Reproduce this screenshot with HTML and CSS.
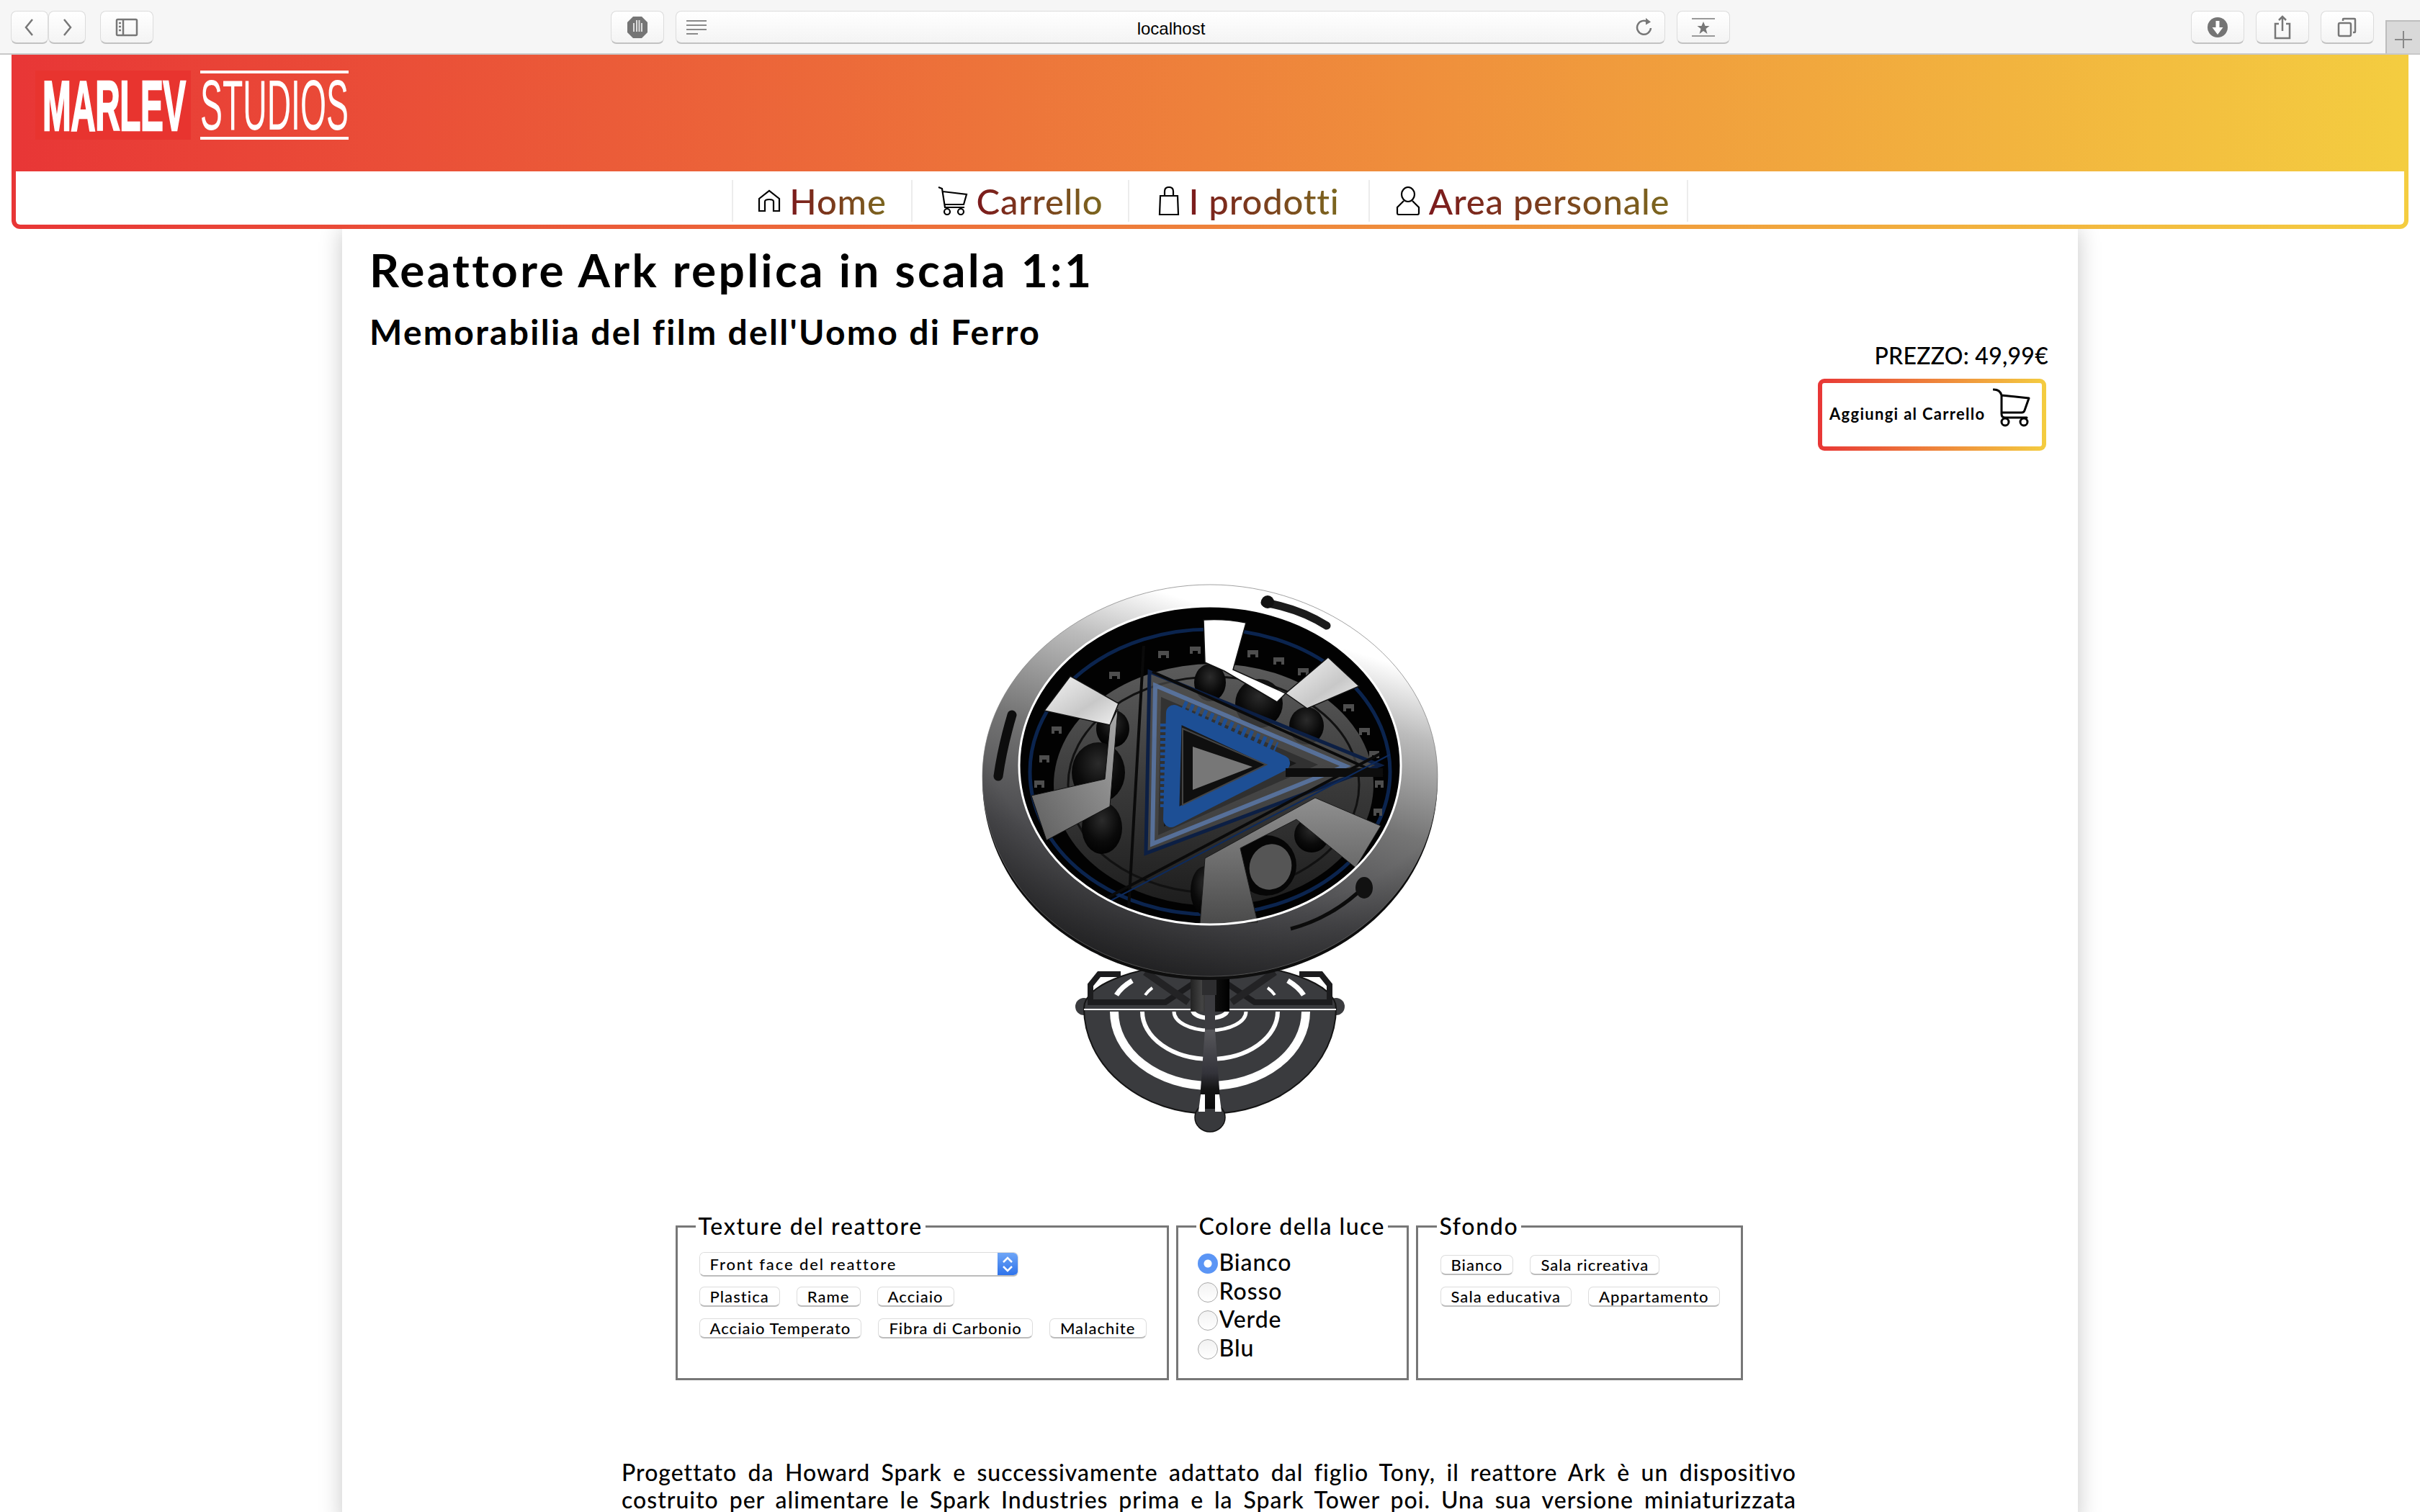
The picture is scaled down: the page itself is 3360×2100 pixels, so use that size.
FILE: index.html
```html
<!DOCTYPE html>
<html lang="it">
<head>
<meta charset="utf-8">
<title>Reattore Ark</title>
<link rel="stylesheet" href="styles.css">
</head>
<body>
<div class="toolbar">
  <div class="tb-group">
    <div class="tb-pair">
      <span class="tb-btn tb-nav"><svg width="16" height="28" viewBox="0 0 16 28"><path d="M12 3 3 14l9 11" class="ico"/></svg></span>
      <span class="tb-btn tb-nav"><svg width="16" height="28" viewBox="0 0 16 28"><path d="M4 3l9 11-9 11" class="ico"/></svg></span>
    </div>
    <span class="tb-btn tb-wide"><svg width="32" height="26" viewBox="0 0 32 26"><rect x="2" y="2" width="28" height="22" rx="1.5" class="ico"/><path d="M11 2v22" class="ico"/><path d="M5 7h3M5 12h3M5 17h3" class="ico"/></svg></span>
  </div>
  <div class="tb-center">
    <span class="tb-btn tb-wide"><svg width="30" height="32" viewBox="0 0 30 32"><path d="M9 1h12l8 8v14l-8 8H9l-8-8V9z" fill="#757575"/><path d="M10 22V10M14 22V6M17.500 22V6M21 22V10" stroke="#fff" stroke-width="2" opacity=".75"/></svg></span>
    <div class="url">
      <svg class="url-lines" width="28" height="22" viewBox="0 0 28 22"><path d="M0 2h28M0 8h28M0 14h28M0 20h16" stroke="#8a8a8a" stroke-width="2"/></svg>
      <span class="url-text">localhost</span>
      <svg class="url-reload" width="24" height="28" viewBox="0 0 24 28"><path d="M17 6.500A9.500 9.500 0 1 0 21 15" class="ico"/><path d="M14 1l7 5.500-7 4z" fill="#777"/></svg>
    </div>
    <span class="tb-btn tb-wide"><svg width="36" height="28" viewBox="0 0 36 28"><path d="M2 2h32M2 26h32" stroke="#999" stroke-width="2"/><path d="M18 6l2.500 6h6l-5 4 2 7-5.500-4-5.500 4 2-7-5-4h6z" fill="#777"/></svg></span>
  </div>
  <div class="tb-right">
    <span class="tb-btn tb-wide"><svg width="30" height="30" viewBox="0 0 30 30"><circle cx="15" cy="15" r="14" fill="#757575"/><path d="M12.500 6h5v9h5L15 25 7.500 15h5z" fill="#fff"/></svg></span>
    <span class="tb-btn tb-wide"><svg width="26" height="34" viewBox="0 0 26 34"><path d="M8 12H3v20h20V12h-5M13 22V2M8 7l5-5 5 5" class="ico"/></svg></span>
    <span class="tb-btn tb-wide"><svg width="28" height="28" viewBox="0 0 28 28"><rect x="2" y="8" width="17" height="18" rx="2" class="ico"/><path d="M8 5V3q0-1 1-1h15q1 0 1 1v17q0 1-1 1h-2" class="ico"/></svg></span>
    <span class="tb-plus"><svg width="24" height="24" viewBox="0 0 24 24"><path d="M12 0v24M0 12h24" stroke="#888" stroke-width="2"/></svg></span>
  </div>
</div>

<header class="site-header">
  <div class="brand">
    <div class="logo">
      <div class="logo-box"><span class="logo-marlev">MARLEV</span></div>
      <div class="logo-studios"><span class="logo-studios-text">STUDIOS</span></div>
    </div>
  </div>
  <nav class="site-nav">
    <ul class="nav-list">
      <li class="nav-item"><svg class="nav-ico" width="32" height="32" viewBox="0 0 32 32"><path d="M2 30V13L16 2l14 11v17h-8V17q0-3-6-3t-6 3v13z" class="ico-k"/></svg><a class="nav-link">Home</a></li>
      <li class="nav-item"><svg class="nav-ico" width="42" height="40" viewBox="0 0 42 40"><path d="M1 1l5 2 4 26h27M7 7l33 4-4 14H10" class="ico-k"/><circle cx="13" cy="35" r="4" class="ico-k"/><circle cx="32" cy="35" r="4" class="ico-k"/></svg><a class="nav-link">Carrello</a></li>
      <li class="nav-item"><svg class="nav-ico" width="30" height="40" viewBox="0 0 30 40"><path d="M3 13h24l1 26H2zM9 13V7q0-6 6-6t6 6v6" class="ico-k"/></svg><a class="nav-link">I prodotti</a></li>
      <li class="nav-item nav-item-last"><svg class="nav-ico" width="34" height="40" viewBox="0 0 34 40"><ellipse cx="17" cy="11" rx="9" ry="10" class="ico-k"/><path d="M11 20 2 29v8q0 2 2 2h26q2 0 2-2v-8l-9-9" class="ico-k"/></svg><a class="nav-link">Area personale</a></li>
    </ul>
  </nav>
</header>

<main class="card">
  <div class="product-head">
    <div class="titles">
      <h1 class="title">Reattore Ark replica in scala 1:1</h1>
      <h2 class="subtitle">Memorabilia del film dell'Uomo di Ferro</h2>
    </div>
    <div class="purchase">
      <div class="price">PREZZO: 49,99€</div>
      <button class="add-cart" type="button">
        <span class="add-cart-text">Aggiungi al Carrello</span>
        <svg class="add-cart-ico" width="52" height="54" viewBox="0 0 52 54"><path d="M1 2q9 0 11 8v26q0 5 5 5h30M12 10l38 4-6 17q-1 3-4 3H12" class="ico-cart"/><circle cx="17" cy="47" r="5" class="ico-cart"/><circle cx="43" cy="47" r="5" class="ico-cart"/></svg>
      </button>
    </div>
  </div>

  <svg class="reactor" width="700" height="800" viewBox="1330 790 700 800" role="img" aria-label="Modello 3D del reattore Ark">
    <defs>
      <linearGradient id="ringG" x1=".72" y1="0" x2=".36" y2="1">
        <stop offset="0" stop-color="#fff"/><stop offset=".12" stop-color="#fff"/><stop offset=".27" stop-color="#bcbcbc"/>
        <stop offset=".5" stop-color="#757575"/><stop offset=".75" stop-color="#4a4a4d"/><stop offset="1" stop-color="#2e2e30"/>
      </linearGradient>
      <radialGradient id="edgeG" cx=".55" cy=".28" r=".78">
        <stop offset="0" stop-color="#000" stop-opacity="0"/><stop offset=".72" stop-color="#000" stop-opacity="0"/><stop offset="1" stop-color="#000" stop-opacity=".4"/>
      </radialGradient>
      <linearGradient id="discG" x1="0" y1="0" x2="0" y2="1">
        <stop offset="0" stop-color="#5c5c5c"/><stop offset=".5" stop-color="#3a3a3a"/><stop offset="1" stop-color="#1d1d1d"/>
      </linearGradient>
      <linearGradient id="finW" x1="0" y1="0" x2="1" y2="1">
        <stop offset="0" stop-color="#f4f4f4"/><stop offset=".6" stop-color="#c8c8c8"/><stop offset="1" stop-color="#f0f0f0"/>
      </linearGradient>
      <linearGradient id="finL" x1="1" y1="0" x2="0" y2="1">
        <stop offset="0" stop-color="#a8a8a8"/><stop offset="1" stop-color="#5e5e5e"/>
      </linearGradient>
      <linearGradient id="finB" x1="0" y1="0" x2="0" y2="1">
        <stop offset="0" stop-color="#909090"/><stop offset="1" stop-color="#4a4a4a"/>
      </linearGradient>
      <linearGradient id="spineG" x1="0" y1="0" x2="0" y2="1">
        <stop offset="0" stop-color="#58585c"/><stop offset=".55" stop-color="#33333a"/><stop offset=".75" stop-color="#141414"/><stop offset="1" stop-color="#0a0a0a"/>
      </linearGradient>
      <linearGradient id="postG" x1="0" y1="0" x2="1" y2="0">
        <stop offset="0" stop-color="#222"/><stop offset=".3" stop-color="#444"/><stop offset=".55" stop-color="#111"/><stop offset="1" stop-color="#000"/>
      </linearGradient>
      <radialGradient id="holeG" cx=".5" cy=".35" r=".7">
        <stop offset="0" stop-color="#2b2b2b"/><stop offset=".6" stop-color="#0a0a0a"/><stop offset="1" stop-color="#000"/>
      </radialGradient>
    </defs>

    <!-- base -->
    <circle cx="1505" cy="1398" r="12" fill="#3a3b3e"/>
    <circle cx="1855" cy="1398" r="12" fill="#3a3b3e"/>
    <path d="M1505 1400A175 62 0 0 1 1855 1400A175 147 0 0 1 1505 1400Z" fill="#3a3b3e" stroke="#141414" stroke-width="2"/>
    <ellipse cx="1680" cy="1552" rx="21" ry="20" fill="#38393c" stroke="#111" stroke-width="1.500"/>
    <g fill="none" stroke="#fff">
      <path d="M1547 1405A133 103 0 0 0 1813 1405" stroke-width="12"/>
      <path d="M1586 1405A94 66 0 0 0 1774 1405" stroke-width="6"/>
      <path d="M1630 1405A50 26 0 0 0 1730 1405" stroke-width="5"/>
      <path d="M1656 1403A24 11 0 0 0 1704 1403" stroke-width="6"/>
      <path d="M1550 1382A130 60 0 0 1 1572 1362" stroke-width="7"/>
      <path d="M1810 1382A130 60 0 0 0 1788 1362" stroke-width="7"/>
      <path d="M1590 1382A90 40 0 0 1 1600 1372" stroke-width="4"/>
      <path d="M1770 1382A90 40 0 0 0 1760 1372" stroke-width="4"/>
    </g>
    <path d="M1505 1402H1855" stroke="#fff" stroke-width="2"/>
    <path d="M1673 1430h14l8 110h-30z" fill="url(#spineG)"/>
    <path d="M1667 1520h6v24h-9zM1687 1520h6l3 24h-9z" fill="#fff"/>
    <path d="M1658 1365l-40 27h-104v-24l12-15h30" fill="none" stroke="#1c1c1e" stroke-width="8"/>
    <path d="M1702 1365l40 27h104v-24l-12-15h-30" fill="none" stroke="#1c1c1e" stroke-width="8"/>
    <path d="M1590 1350l60 42M1770 1350l-60 42" stroke="#232325" stroke-width="10"/>
    <rect x="1653" y="1355" width="54" height="50" fill="url(#postG)"/>
    <path d="M1669 1360h20v22h-20z" fill="#2d2d2f"/>
    <path d="M1673 1382h14v48h-14z" fill="#3c3c40"/>

    <!-- ring -->
    <path d="M1680 817C1840 817 1996 930 1996 1083C1996 1245 1850 1361 1680 1361C1510 1361 1364 1245 1364 1083C1364 930 1520 817 1680 817Z" fill="#0e0e0e"/>
    <path d="M1680 812C1840 812 1996 925 1996 1078C1996 1240 1850 1356 1680 1356C1510 1356 1364 1240 1364 1078C1364 925 1520 812 1680 812Z" fill="url(#ringG)" stroke="#7a7a7a" stroke-width=".7"/>
    <path d="M1680 812C1840 812 1996 925 1996 1078C1996 1240 1850 1356 1680 1356C1510 1356 1364 1240 1364 1078C1364 925 1520 812 1680 812Z" fill="url(#edgeG)"/>
    <path d="M1756 837C1790 843 1820 855 1842 869" fill="none" stroke="#1b1b1b" stroke-width="11" stroke-linecap="round"/>
    <circle cx="1760" cy="836" r="9" fill="#111"/>
    <path d="M1405 993C1397 1020 1390 1050 1386 1078" fill="none" stroke="#0d0d0d" stroke-width="13" stroke-linecap="round"/>
    <path d="M1792 1290C1830 1280 1860 1262 1885 1240" fill="none" stroke="#0b0b0b" stroke-width="5"/>
    <ellipse cx="1894" cy="1233" rx="12" ry="15" fill="#111"/>

    <!-- well -->
    <ellipse cx="1680" cy="1063" rx="265" ry="221" fill="#020202"/>
    <ellipse cx="1680" cy="1072" rx="250" ry="198" fill="none" stroke="#0d2a5c" stroke-width="5" stroke-opacity=".85"/>
    <g fill="#4e4e4e">
      <path d="M1608 904h15v10h-4v-4h-7v4h-4zM1652 898h15v10h-4v-4h-7v4h-4zM1732 903h15v10h-4v-4h-7v4h-4zM1768 913h15v10h-4v-4h-7v4h-4zM1802 928h15v10h-4v-4h-7v4h-4zM1540 933h15v10h-4v-4h-7v4h-4z"/>
      <path d="M1865 978h15v10h-4v-4h-7v4h-4zM1887 1011h15v10h-4v-4h-7v4h-4zM1901 1043h14v10h-4v-4h-6v4h-4zM1909 1084h12v10h-4v-4h-4v4h-4zM1907 1123h12v10h-4v-4h-4v4h-4z"/>
      <path d="M1460 1009h14v10h-4v-4h-6v4h-4zM1443 1049h14v10h-4v-4h-6v4h-4zM1436 1084h14v10h-4v-4h-6v4h-4z"/>
    </g>
    <ellipse cx="1685" cy="1090" rx="222" ry="168" fill="url(#discG)"/>
    <ellipse cx="1685" cy="1090" rx="202" ry="150" fill="none" stroke="#111" stroke-width="3"/>
    <g fill="url(#holeG)">
      <ellipse cx="1680" cy="948" rx="22" ry="26"/>
      <ellipse cx="1748" cy="977" rx="33" ry="34"/>
      <ellipse cx="1814" cy="1008" rx="24" ry="26"/>
      <ellipse cx="1545" cy="1012" rx="23" ry="26"/>
      <ellipse cx="1525" cy="1073" rx="37" ry="42"/>
      <ellipse cx="1530" cy="1150" rx="28" ry="36"/>
      <ellipse cx="1821" cy="1160" rx="24" ry="24"/>
      <ellipse cx="1673" cy="1237" rx="20" ry="34"/>
    </g>
    <ellipse cx="1758" cy="1202" rx="42" ry="42" fill="#060606"/>
    <ellipse cx="1764" cy="1204" rx="29" ry="32" fill="#555" transform="rotate(20 1764 1204)"/>

    <!-- triangle -->
    <path d="M1596 933L1916 1063L1591 1185Z" fill="#4a4a4a" fill-opacity=".72" stroke="#0c1f44" stroke-width="5"/>
    <path d="M1604 952L1868 1064L1600 1172Z" fill="none" stroke="#5b78a8" stroke-width="6" stroke-opacity=".85"/>
    <path d="M1612 968L1830 1062L1608 1160Z" fill="#2c2c2c" fill-opacity=".8"/>
    <path d="M1620 985L1800 1060L1616 1148Z" fill="#181818"/>
    <path d="M1640 985L1770 1043" stroke="#1d4f95" stroke-width="26" stroke-dasharray="5 5" fill="none"/>
    <path d="M1615 1005V1125" stroke="#1d4f95" stroke-width="8" stroke-dasharray="4 4" fill="none"/>
    <path d="M1630 990L1780 1060L1626 1138Z" fill="none" stroke="#1d4f95" stroke-width="22" stroke-linejoin="round"/>
    <path d="M1642 1012L1758 1062L1642 1118Z" fill="#0f0f0f" stroke="#444" stroke-width="2"/>
    <path d="M1656 1037L1739 1065L1656 1097Z" fill="#777"/>
    <path d="M1588 897L1567 1263M1537 1247L1916 1047M1600 933L1920 1077" stroke="#0a0a0a" stroke-width="4" fill="none"/>
    <path d="M1785 1073H1920" stroke="#0d0d0d" stroke-width="12"/>
    <path d="M1930 1048L1540 1252" stroke="#0d2a5c" stroke-width="2"/>

    <!-- fins -->
    <path d="M1671 861Q1700 859 1730 865L1712 930L1785 963L1773 975L1700 932L1673 920Z" fill="#fff" stroke="#111" stroke-width="1.500"/>
    <path d="M1844 913L1887 953L1815 984L1785 963Z" fill="url(#finW)" stroke="#111" stroke-width="1.500"/>
    <path d="M1486 939L1553 977L1541 1007L1450 987Z" fill="url(#finW)" stroke="#111" stroke-width="1.500"/>
    <path d="M1432 1105L1534 1082L1541 1007L1552 985L1541 1120L1453 1167Z" fill="url(#finL)" stroke="#111" stroke-width="1"/>
    <path d="M1826 1108L1917 1147L1882 1205L1800 1138L1722 1178L1746 1281L1666 1284L1673 1192Z" fill="url(#finB)" stroke="#1a1a1a" stroke-width="1"/>

    <!-- rim highlight -->
    <ellipse cx="1680" cy="1063" rx="265" ry="221" fill="none" stroke="#fff" stroke-width="3"/>
  </svg>

  <div class="controls">
    <fieldset class="panel">
      <legend class="panel-title">Texture del reattore</legend>
      <div class="select-wrap">
        <select class="select-box"><option>Front face del reattore</option></select>
        <span class="stepper"><svg width="16" height="24" viewBox="0 0 16 24"><path d="M2 9l6-6 6 6M2 15l6 6 6-6" fill="none" stroke="#fff" stroke-width="2.500"/></svg></span>
      </div>
      <div class="btn-row">
        <button class="mini" type="button">Plastica</button>
        <button class="mini" type="button">Rame</button>
        <button class="mini" type="button">Acciaio</button>
      </div>
      <div class="btn-row">
        <button class="mini" type="button">Acciaio Temperato</button>
        <button class="mini" type="button">Fibra di Carbonio</button>
        <button class="mini" type="button">Malachite</button>
      </div>
    </fieldset>
    <fieldset class="panel panel-light">
      <legend class="panel-title">Colore della luce</legend>
      <label class="radio-line"><input class="radio" type="radio" name="luce" checked>Bianco</label>
      <label class="radio-line"><input class="radio" type="radio" name="luce">Rosso</label>
      <label class="radio-line"><input class="radio" type="radio" name="luce">Verde</label>
      <label class="radio-line"><input class="radio" type="radio" name="luce">Blu</label>
    </fieldset>
    <fieldset class="panel panel-bg">
      <legend class="panel-title">Sfondo</legend>
      <div class="btn-row">
        <button class="mini" type="button">Bianco</button>
        <button class="mini" type="button">Sala ricreativa</button>
      </div>
      <div class="btn-row">
        <button class="mini" type="button">Sala educativa</button>
        <button class="mini" type="button">Appartamento</button>
      </div>
    </fieldset>
  </div>

  <p class="description">Progettato da Howard Spark e successivamente adattato dal figlio Tony, il reattore Ark è un dispositivo<br>costruito per alimentare le Spark Industries prima e la Spark Tower poi. Una sua versione miniaturizzata</p>
</main>
</body>
</html>
```
FILE: styles.css
```css
* { box-sizing: border-box; }
html, body { margin: 0; height: 2100px; overflow: hidden; background: #fff; }
body { font-family: "Lato", "Noto Sans", sans-serif; font-weight: 500; color: #000; }

.ico { fill: none; stroke: #777; stroke-width: 2.5; }
.ico-k { fill: none; stroke: #000; stroke-width: 2.2; }
.ico-cart { fill: none; stroke: #000; stroke-width: 3; stroke-linecap: round; stroke-linejoin: round; }

.toolbar { height: 76px; background: #f6f6f6; border-bottom: 2px solid #c8c8c8; display: flex; align-items: flex-start; padding: 15px 0 0 15px; position: relative; }
.tb-group, .tb-center, .tb-right { display: flex; }
.tb-group { gap: 20px; width: 833px; flex: none; }
.tb-pair { display: flex; }
.tb-center { gap: 16px; flex: none; }
.tb-right { gap: 16px; flex: 1; justify-content: flex-end; padding-right: 64px; }
.tb-btn { height: 46px; display: flex; align-items: center; justify-content: center; background: linear-gradient(#fff, #f4f4f4); border: 1px solid #dcdcdc; border-bottom: 2px solid #c2c2c2; border-radius: 8px; }
.tb-nav { width: 52px; }
.tb-wide { width: 74px; flex: none; }
.url { width: 1374px; height: 46px; flex: none; display: flex; align-items: center; padding: 0 16px 0 14px; background: linear-gradient(#fff, #f4f4f4); border: 1px solid #dcdcdc; border-bottom: 2px solid #c2c2c2; border-radius: 8px; }
.url-text { flex: 1; text-align: center; font: 24px "Liberation Sans", sans-serif; margin-top: 4px; }
.tb-plus { position: absolute; right: 0; top: 28px; width: 48px; height: 46px; display: flex; align-items: center; justify-content: center; background: #d9d9d9; border: 2px solid #bdbdbd; border-width: 2px 0 0 2px; padding-top: 6px; }

.site-header { margin: 0 16px; height: 242px; border-radius: 0 0 12px 12px; padding: 0 6px 6px; background: linear-gradient(90deg, #e83636, #f4cd40); display: flex; flex-direction: column; position: relative; z-index: 2; }
.brand { height: 162px; padding: 22px 0 0 33px; margin: 0 -6px; }
.logo { display: flex; gap: 13px; }
.logo-box { width: 216px; height: 96px; background: #e8342f; padding: 0 0 0 10px; }
.logo-marlev { display: inline-block; color: #fff; font: bold 99px/96px "Liberation Sans", sans-serif; -webkit-text-stroke: 2.5px #fff; transform: scaleX(.482); transform-origin: left center; white-space: nowrap; letter-spacing: -1px; margin-top: 1px; }
.logo-studios { width: 206px; height: 96px; border-top: 4px solid #fff; border-bottom: 4px solid #fff; }
.logo-studios-text { display: inline-block; color: #fff; font: 99px/88px "Liberation Sans", sans-serif; transform: scaleX(.468); transform-origin: left center; white-space: nowrap; }

.site-nav { flex: 1; background: #fff; border-radius: 0 0 6px 6px; display: flex; justify-content: center; }
.nav-list { display: grid; grid-template-columns: 249px 301px 334px 442px; list-style: none; margin: 12px 0 0; padding: 0; height: 58px; border-right: 2px solid #ececec; }
.nav-item { display: flex; align-items: center; justify-content: center; gap: 12px; border-left: 2px solid #ececec; }
.nav-item-last { padding-left: 12px; }
.nav-ico { flex: none; }
.nav-link { font-size: 49px; line-height: 58px; letter-spacing: .8px; color: transparent; background: linear-gradient(90deg, #7c1a1c, #7b671f); -webkit-background-clip: text; background-clip: text; white-space: nowrap; }

.card { width: 2410px; margin: 0 auto; position: relative; z-index: 1; background: #fff; box-shadow: 0 0 30px rgba(0, 0, 0, .22); padding: 19px 41px 0 38px; height: 1800px; }
.product-head { display: flex; justify-content: space-between; align-items: flex-start; height: 289px; }
.title { font-size: 64px; line-height: 76px; font-weight: 700; margin: 0 0 20px; letter-spacing: 3.3px; }
.subtitle { font-size: 48px; line-height: 56px; font-weight: 700; margin: 0; letter-spacing: 2.3px; }
.purchase { display: flex; flex-direction: column; align-items: flex-end; padding-top: 138px; }
.price { font-size: 32px; line-height: 38px; letter-spacing: .25px; margin-bottom: 13px; }
.add-cart { width: 317px; height: 100px; margin-right: 3px; padding: 0 16px 0 10px; display: flex; align-items: center; justify-content: space-between; background: linear-gradient(#fff, #fff) padding-box, linear-gradient(90deg, #e83636, #f4cd40) border-box; border: 6px solid transparent; border-radius: 9px; font-family: inherit; }
.add-cart-text { font-size: 22px; font-weight: 700; letter-spacing: 1.3px; color: #000; white-space: nowrap; margin-bottom: 4px; }
.add-cart-ico { margin-bottom: 20px; flex: none; }

.reactor { display: block; margin: 164px auto 0 auto; position: relative; left: 1.500px; }

.controls { display: grid; grid-template-columns: 685px 323px 454px; column-gap: 10px; justify-content: center; margin-top: 93px; }
.panel { margin: 0; min-width: 0; height: 234px; border: 3px solid #777; padding: 16px 28px 0 30px; }
.panel-light { padding-top: 10px; padding-left: 27px; padding-right: 0; }
.panel-bg { padding-top: 20px; padding-left: 31px; padding-right: 0; }
.panel-title { font-size: 32px; line-height: 40px; padding: 0 4px; margin-left: -5px; margin-top: 1px; letter-spacing: 1.7px; white-space: nowrap; }
.panel-light .panel-title { margin-left: -2px; letter-spacing: 1.5px; }
.select-wrap { width: 443px; height: 34px; display: flex; border: 1px solid #dcdcdc; border-bottom: 2px solid #bcbcbc; border-radius: 7px; overflow: hidden; }
.select-box { flex: 1; min-width: 0; appearance: none; -webkit-appearance: none; border: 0; background: #fff; font: 500 22px "Lato", sans-serif; letter-spacing: 1.9px; padding: 0 14px; color: #000; }
.stepper { width: 28px; flex: none; display: flex; align-items: center; justify-content: center; background: linear-gradient(#6fa6f7, #2f73ea); }
.btn-row { display: flex; gap: 23px; margin-top: 16px; }
.select-wrap + .btn-row { margin-top: 14px; }
.panel-bg .btn-row:first-of-type { margin-top: 0; }
.mini { height: 28px; padding: 0 14px; background: #fff; border: 1px solid #dcdcdc; border-bottom: 2px solid #bcbcbc; border-radius: 7px; font: 500 22px/24px "Lato", sans-serif; letter-spacing: 1.05px; color: #000; white-space: nowrap; }
.radio-line { display: flex; align-items: center; height: 40px; margin-bottom: -.5px; font-size: 32px; line-height: 40px; letter-spacing: .9px; }
.radio { appearance: none; -webkit-appearance: none; width: 28px; height: 28px; margin: 4px 2px 0 0; flex: none; border-radius: 50%; background: linear-gradient(#f2f2f2, #fff); border: 1px solid #a8a8a8; }
.radio:checked { border: 0; background: radial-gradient(circle, #fff 0 5px, #5b95f5 6px); }

.description { width: 1631px; margin: 109px auto 0; font-size: 32px; line-height: 38px; letter-spacing: 1px; text-align: justify; text-align-last: justify; }
```
